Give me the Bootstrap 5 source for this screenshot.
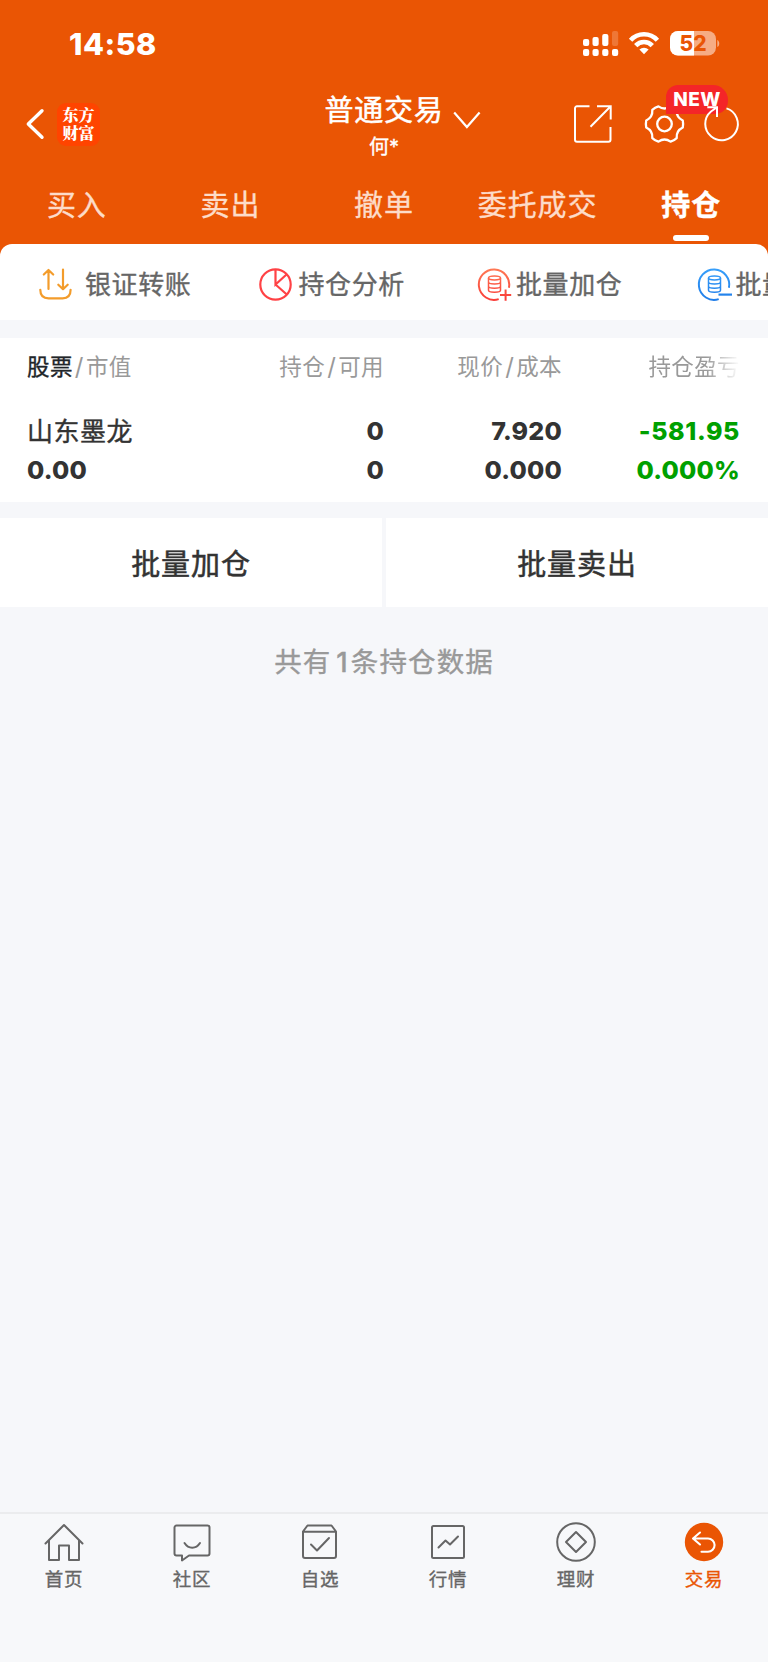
<!DOCTYPE html>
<html lang="zh-CN">
<head>
<meta charset="utf-8">
<meta name="viewport" content="width=device-width, initial-scale=1">
<title>持仓</title>
<link href="https://cdn.jsdelivr.net/npm/bootstrap@5.3.0/dist/css/bootstrap.min.css" rel="stylesheet">
<style>
  :root { --brand: #ea5504; --page: #f6f7fa; --ink: #333; --soft: #999; }
  body { font-family: Inter, "Noto Sans CJK SC", sans-serif; background: var(--page); color: var(--ink); min-height: 1662px; line-height: 1; overflow-x: hidden; }
  svg { display: block; flex: none; overflow: visible; fill: none; }
  .cjk-md { -webkit-text-stroke: .5px currentColor; }
  .cjk-sm { -webkit-text-stroke: .35px currentColor; }
  .app-top { background: var(--brand); color: #fff; }
  .status { height: 80px; padding: 28px 48px 0 69px; }
  .clock { font-size: 30.5px; line-height: 32px; font-weight: 800; letter-spacing: .5px; }
  .titlebar { height: 88px; padding: 0 29px 0 26px; }
  .brand-logo { width: 43px; height: 43px; margin-left: 13px; border-radius: 9px; background: #ff4400; font: 900 16px/18px "Noto Serif CJK SC", "Noto Sans CJK SC", sans-serif; }
  .title-main { font-size: 29px; line-height: 38px; letter-spacing: .8px; }
  .title-sub { font-size: 20px; line-height: 26px; margin-top: 4px; }
  .title-arrow { left: 129px; top: 20px; }
  .new-tag { left: 21px; top: -20px; width: 62px; height: 29px; background: #f42528; border-radius: 12px 15px 13px 0; font-size: 19px; font-weight: 800; letter-spacing: .5px; }
  .tabs-row { height: 76px; font-size: 29px; letter-spacing: .9px; }
  .tabs-row a { width: 20%; color: #fddcc9; text-decoration: none; text-align: center; line-height: 75px; height: 76px; }
  .tabs-row a.current { color: #fff; font-weight: 700; }
  .tab-mark { width: 36px; height: 6px; border-radius: 3px; background: #fff; left: calc(50% - 18px); bottom: 3px; }
  .tools { height: 76px; background: #fff; border-radius: 12px 12px 0 0; padding: 3px 0 0 39px; color: #666; font-size: 26px; letter-spacing: .6px; }
  .tool { width: 219.5px; flex: none; white-space: nowrap; line-height: 80px; height: 74px; }
  .tool span { padding-top: 2px; }
  .holdings { margin-top: 18px; height: 164px; background: #fff; padding: 0 29px 0 27px; }
  .line { display: grid; grid-template-columns: 178px 179px 178px 178px; text-align: right; white-space: nowrap; }
  .line > :first-child { text-align: left; }
  .line-head { height: 74px; line-height: 58px; font-size: 22.5px; letter-spacing: .4px; color: var(--soft); }
  .line-head i { font-style: normal; margin: 0 2px; font-size: 24px; }
  .fade-end { -webkit-mask-image: linear-gradient(to right, #000 calc(100% - 34px), transparent); mask-image: linear-gradient(to right, #000 calc(100% - 34px), transparent); }
  .line-data { height: 39px; line-height: 39px; font-size: 25px; font-weight: 800; letter-spacing: .2px; }
  .line-data .fall:not(.pct) { letter-spacing: .6px; }
  .stock { font-size: 26px; font-weight: 400; letter-spacing: .5px; }
  .fall { color: #00a000; }
  .bulk { margin-top: 15.5px; gap: 4px; }
  .bulk button { flex: 1; border: 0; background: #fff; height: 89.5px; font-size: 29px; letter-spacing: .9px; color: var(--ink); padding: 4px 0 0; }
  .summary { margin-top: 35px; text-align: center; font-size: 27.5px; line-height: 40px; letter-spacing: 1.1px; color: var(--soft); }
  .summary b { font-weight: 500; margin: 0 2px 0 5px; }
  .dock { height: 150px; border-top: 2px solid #ebecee; background: #f7f8fa; padding-top: 8.5px; }
  .dock a { width: 16.6667%; color: #666; text-decoration: none; font-size: 18.5px; letter-spacing: .7px; line-height: 30px; text-align: center; }
  .dock a.current { color: var(--brand); }
  .dock svg { margin: 0 auto 1px; stroke: currentColor; stroke-width: 2; stroke-linejoin: round; stroke-linecap: round; }
</style>
</head>
<body class="d-flex flex-column">
<header class="app-top">
  <div class="status d-flex justify-content-between">
    <div class="clock">14:58</div>
    <div class="d-flex">
      <svg width="36" height="28" viewBox="0 0 36 28"><g fill="#fff">
        <rect x="0" y="21" width="6.2" height="7" rx="2"/><rect x="9.5" y="21" width="6.2" height="7" rx="2"/><rect x="19.2" y="21" width="6.2" height="7" rx="2"/><rect x="29" y="21" width="6.2" height="7" rx="2"/>
        <rect x="0" y="11" width="6.2" height="7" rx="2"/><rect x="9.5" y="9" width="6.2" height="9" rx="2"/><rect x="19.2" y="6" width="6.2" height="12" rx="2"/><rect x="29" y="3" width="6.2" height="15" rx="2" opacity=".2"/></g></svg>
      <svg class="ms-2" width="34" height="28" viewBox="0 0 34 28" stroke="#fff" stroke-width="4.6"><path d="M3.6 12.2a18.2 18.2 0 0 1 26.8 0"/><path d="M8.7 17.6a11.4 11.4 0 0 1 16.6 0"/><path d="M17 26.2l-4.6-4.6a6.6 6.6 0 0 1 9.2 0z" fill="#fff" stroke="none"/></svg>
      <svg style="margin-left:9px" width="50" height="28" viewBox="0 0 50 28"><rect y="3" width="46" height="24.6" rx="8" fill="#f6ac84"/><path d="M8 3h16v24.6H8a8 8 0 0 1-8-8V11a8 8 0 0 1 8-8z" fill="#fff"/><path d="M47.3 12c2.6 1 2.6 6 0 7z" fill="#f6ac84"/><text x="23" y="23" text-anchor="middle" font-family="Inter" font-weight="800" font-size="21" fill="#ea5504">52</text></svg>
    </div>
  </div>
  <div class="titlebar position-relative d-flex align-items-center">
    <svg width="18" height="30" viewBox="0 0 18 30" stroke="#fff" stroke-width="3.4" stroke-linecap="round" stroke-linejoin="round"><path d="M16 1.8L2.3 15 16 28.2"/></svg>
    <div class="brand-logo d-flex align-items-center justify-content-center text-center">东方<br>财富</div>
    <div class="position-absolute start-50 top-0 translate-middle-x pt-2 mt-1 text-center">
      <div class="title-main text-nowrap position-relative cjk-md">普通交易
        <svg class="title-arrow position-absolute" width="27" height="16" viewBox="0 0 27 16" stroke="#fff" stroke-width="2.2"><path d="M.8.6L13.5 15 26.2.6"/></svg>
      </div>
      <div class="title-sub cjk-sm">何*</div>
    </div>
    <div class="ms-auto d-flex align-items-center">
      <svg width="38" height="38" viewBox="0 0 38 38" stroke="#fff" stroke-width="2"><path d="M15.5 1.3H3a2 2 0 0 0-2 2v31.5a2 2 0 0 0 2 2h31.5a2 2 0 0 0 2-2V22M23 1.300h13.700V14.500M36.700 1.300L16.500 21.800"/></svg>
      <div class="position-relative" style="margin-left:33px">
        <svg width="39" height="38" viewBox="-19.5 -19 39 38" stroke="#fff" stroke-width="2.3" stroke-linejoin="round"><path d="M18.260-3.550Q19 0 18.260 3.550Q11.600 6.700 12.200 14.040Q9.500 16.500 6.060 17.590Q0 13.400-6.060 17.590Q-9.500 16.500-12.200 14.040Q-11.600 6.700-18.260 3.550Q-19 0-18.260-3.550Q-11.600-6.700-12.200-14.040Q-9.500-16.500-6.060-17.590Q0-13.400 6.060-17.590Q9.500-16.500 12.200-14.040Q11.600-6.700 18.260-3.550z"/><circle r="7.3"/></svg>
        <div class="new-tag position-absolute d-flex align-items-center justify-content-center">NEW</div>
      </div>
      <svg class="position-relative" style="margin-left:20px" width="35" height="38" viewBox="0 0 35 38" stroke="#fff" stroke-width="2"><path d="M22.500 3.400A16.300 16.300 0 1 1 7 6.500M3.300 2.300H13V12M13 2.300L7 6.500"/></svg>
    </div>
  </div>
  <nav class="tabs-row d-flex cjk-sm">
    <a href="#">买入</a><a href="#">卖出</a><a href="#">撤单</a><a href="#">委托成交</a>
    <a href="#" class="current position-relative">持仓<span class="tab-mark position-absolute"></span></a>
  </nav>
  <div class="tools d-flex overflow-hidden cjk-sm">
    <div class="tool d-flex align-items-center"><svg width="33" height="33" viewBox="0 0 33 33" stroke="#f39c2b" stroke-width="2.2" stroke-linecap="round" stroke-linejoin="round"><path d="M9.500 21V2.200M4.800 6.500l4.700-4.500 4.700 4.500M24 1.500v19.500M19.300 16.700l4.700 4.500 4.700-4.500M1.300 21.800c0 5.800 2.600 8.600 8.300 8.600h14c5.700 0 8-2.800 8-8.600"/></svg><span style="margin-left:13px">银证转账</span></div>
    <div class="tool d-flex align-items-center"><svg width="33" height="33" viewBox="0 0 33 33" stroke="#ff4245" stroke-width="2.2"><circle cx="16.5" cy="16.5" r="15.2"/><path d="M16.500 1.300v15.200L27.500 6.500M16.500 16.500l11.300 10"/></svg><span style="margin-left:7px">持仓分析</span></div>
    <div class="tool d-flex align-items-center"><svg width="33" height="33" viewBox="0 0 33 33" stroke="url(#warm)" stroke-width="2"><defs><linearGradient id="warm" gradientUnits="userSpaceOnUse" x1="0" y1="0" x2="0" y2="33"><stop stop-color="#ff7a55"/><stop offset="1" stop-color="#f93c38"/></linearGradient></defs><path d="M20.700 31.100a15.200 15.200 0 1 1 10.200-11.300"/><g stroke-width="1.5"><path d="M10.500 10v12.200c0 2.600 12 2.600 12 0V10M10.500 14.100c0 2.600 12 2.600 12 0M10.500 18.200c0 2.600 12 2.600 12 0"/><ellipse cx="16.5" cy="10" rx="6" ry="1.9"/></g><path d="M22 27h11.200M27.600 21.500v11.200"/></svg><span style="margin-left:5px">批量加仓</span></div>
    <div class="tool d-flex align-items-center"><svg width="33" height="33" viewBox="0 0 33 33" stroke="url(#cool)" stroke-width="2"><defs><linearGradient id="cool" gradientUnits="userSpaceOnUse" x1="0" y1="0" x2="0" y2="33"><stop stop-color="#38a0fb"/><stop offset="1" stop-color="#1f7ce8"/></linearGradient></defs><path d="M20.700 31.100a15.200 15.200 0 1 1 10.200-11.300"/><g stroke-width="1.5"><path d="M10.500 10v12.200c0 2.600 12 2.600 12 0V10M10.500 14.100c0 2.600 12 2.600 12 0M10.500 18.200c0 2.600 12 2.600 12 0"/><ellipse cx="16.5" cy="10" rx="6" ry="1.9"/></g><path d="M21.500 26.500H33v.2H21.500z"/></svg><span style="margin-left:5px">批量卖出</span></div>
  </div>
</header>
<main class="flex-grow-1">
  <section class="holdings">
    <div class="line line-head">
      <div><span class="text-body cjk-sm">股票</span><i>/</i>市值</div>
      <div>持仓<i>/</i>可用</div><div>现价<i>/</i>成本</div><div class="fade-end">持仓盈亏</div>
    </div>
    <div class="line line-data"><div class="stock cjk-sm">山东墨龙</div><div>0</div><div>7.920</div><div class="fall">-581.95</div></div>
    <div class="line line-data"><div>0.00</div><div>0</div><div>0.000</div><div class="fall pct">0.000%</div></div>
  </section>
  <div class="bulk d-flex"><button type="button" class="cjk-md">批量加仓</button><button type="button" class="cjk-md">批量卖出</button></div>
  <p class="summary mb-0 cjk-sm">共有<b>1</b>条持仓数据</p>
</main>
<nav class="dock d-flex cjk-sm">
  <a href="#"><svg width="40" height="40" viewBox="0 0 40 40"><path d="M1.500 20.500L20 2l18.500 18.500M5 17.500V37h10V22.500h10V37h10V17.500"/></svg>首页</a>
  <a href="#"><svg width="40" height="40" viewBox="0 0 40 40"><path d="M4.500 2.500h31a2 2 0 0 1 2 2v26a2 2 0 0 1-2 2H17l-7 5v-5H4.500a2 2 0 0 1-2-2v-26a2 2 0 0 1 2-2zM12.500 20c4 6.300 11.500 6.300 15.500 0"/></svg>社区</a>
  <a href="#"><svg width="40" height="40" viewBox="0 0 40 40"><path d="M3 8.500L7.500 2.500h24L36 8.500v24.500a2 2 0 0 1-2 2H5a2 2 0 0 1-2-2zM3 8.800h33M11 21.500l6 6 12-12.500"/></svg>自选</a>
  <a href="#"><svg width="40" height="40" viewBox="0 0 40 40"><rect x="4" y="3" width="32" height="32" rx="1.5"/><path d="M10.500 24.500l7-7 4.500 4 8-8"/></svg>行情</a>
  <a href="#"><svg width="40" height="40" viewBox="0 0 40 40"><circle cx="20" cy="19" r="18.8"/><path d="M20 9l10 10-10 10-10-10z"/></svg>理财</a>
  <a href="#" class="current"><svg width="40" height="40" viewBox="0 0 40 40"><circle cx="20" cy="19" r="19.2" fill="#ea5504" stroke="none"/><path d="M16 9.500l-7 6 7 6M9.500 15.500H24a6.500 6.500 0 0 1 0 13.200H17.500" stroke="#fff" stroke-width="2.1"/></svg>交易</a>
</nav>
<script src="https://cdn.jsdelivr.net/npm/bootstrap@5.3.0/dist/js/bootstrap.bundle.min.js"></script>
</body>
</html>
